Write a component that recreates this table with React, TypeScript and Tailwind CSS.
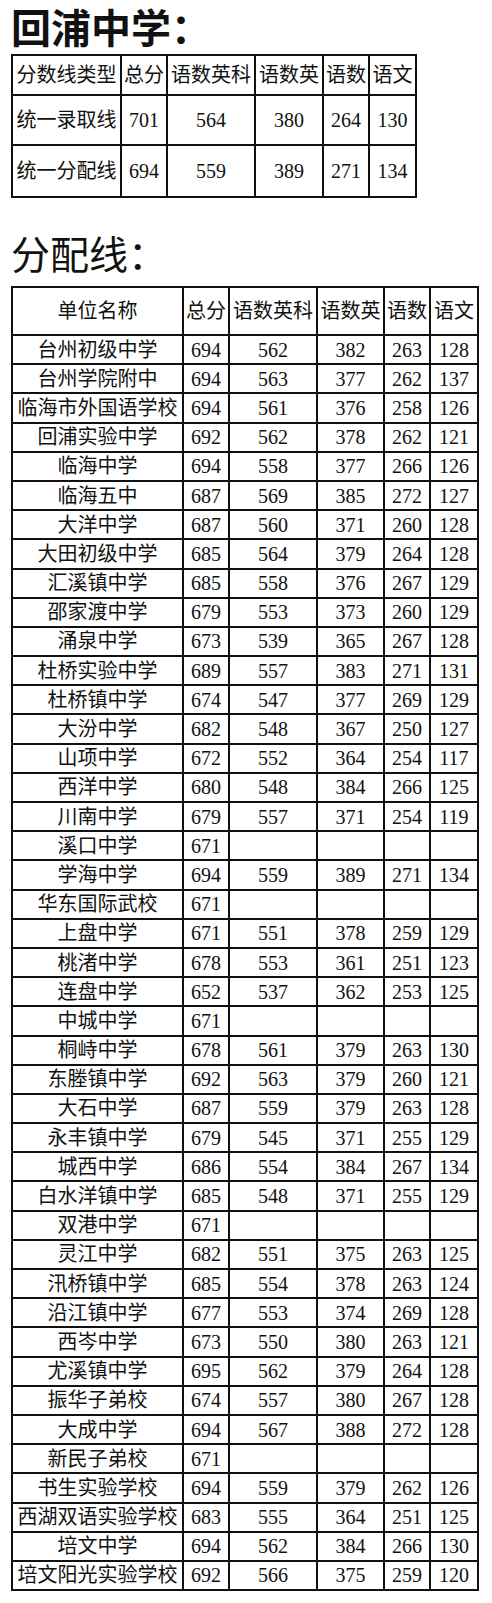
// 回浦中学 admission score lines — static two-table sheet

type Row = [string, string, string?, string?, string?, string?];

const summary: Row[] = [
  ["统一录取线", "701", "564", "380", "264", "130"],
  ["统一分配线", "694", "559", "389", "271", "134"],
];

const schools: Row[] = [
  ["台州初级中学", "694", "562", "382", "263", "128"],
  ["台州学院附中", "694", "563", "377", "262", "137"],
  ["临海市外国语学校", "694", "561", "376", "258", "126"],
  ["回浦实验中学", "692", "562", "378", "262", "121"],
  ["临海中学", "694", "558", "377", "266", "126"],
  ["临海五中", "687", "569", "385", "272", "127"],
  ["大洋中学", "687", "560", "371", "260", "128"],
  ["大田初级中学", "685", "564", "379", "264", "128"],
  ["汇溪镇中学", "685", "558", "376", "267", "129"],
  ["邵家渡中学", "679", "553", "373", "260", "129"],
  ["涌泉中学", "673", "539", "365", "267", "128"],
  ["杜桥实验中学", "689", "557", "383", "271", "131"],
  ["杜桥镇中学", "674", "547", "377", "269", "129"],
  ["大汾中学", "682", "548", "367", "250", "127"],
  ["山项中学", "672", "552", "364", "254", "117"],
  ["西洋中学", "680", "548", "384", "266", "125"],
  ["川南中学", "679", "557", "371", "254", "119"],
  ["溪口中学", "671"],
  ["学海中学", "694", "559", "389", "271", "134"],
  ["华东国际武校", "671"],
  ["上盘中学", "671", "551", "378", "259", "129"],
  ["桃渚中学", "678", "553", "361", "251", "123"],
  ["连盘中学", "652", "537", "362", "253", "125"],
  ["中城中学", "671"],
  ["桐峙中学", "678", "561", "379", "263", "130"],
  ["东塍镇中学", "692", "563", "379", "260", "121"],
  ["大石中学", "687", "559", "379", "263", "128"],
  ["永丰镇中学", "679", "545", "371", "255", "129"],
  ["城西中学", "686", "554", "384", "267", "134"],
  ["白水洋镇中学", "685", "548", "371", "255", "129"],
  ["双港中学", "671"],
  ["灵江中学", "682", "551", "375", "263", "125"],
  ["汛桥镇中学", "685", "554", "378", "263", "124"],
  ["沿江镇中学", "677", "553", "374", "269", "128"],
  ["西岑中学", "673", "550", "380", "263", "121"],
  ["尤溪镇中学", "695", "562", "379", "264", "128"],
  ["振华子弟校", "674", "557", "380", "267", "128"],
  ["大成中学", "694", "567", "388", "272", "128"],
  ["新民子弟校", "671"],
  ["书生实验学校", "694", "559", "379", "262", "126"],
  ["西湖双语实验学校", "683", "555", "364", "251", "125"],
  ["培文中学", "694", "562", "384", "266", "130"],
  ["培文阳光实验学校", "692", "566", "375", "259", "120"],
];

const cell =
  "font-['Liberation_Serif','Noto_Sans_CJK_SC',serif] border-2 border-[#111] p-0 text-center align-middle whitespace-nowrap";

export default function App() {
  return (
    <div className="font-['Liberation_Serif','Noto_Sans_CJK_SC',serif] bg-white text-[#111] w-[492px] min-h-[1603px] pl-[11px] pt-[10px]">
      <h1 className="text-[40px] leading-[40px] font-bold">回浦中学：</h1>

      <table className="mt-[4px] table-fixed border-collapse text-[20px] leading-none w-[404px]">
        <colgroup>
          <col className="w-[109px]" />
          <col className="w-[46px]" />
          <col className="w-[88px]" />
          <col className="w-[68px]" />
          <col className="w-[46px]" />
          <col className="w-[47px]" />
        </colgroup>
        <tbody>
          <tr className="h-[40px]">
            {["分数线类型", "总分", "语数英科", "语数英", "语数", "语文"].map((h) => (
              <td key={h} className={cell}>{h}</td>
            ))}
          </tr>
          {summary.map((r, i) => (
            <tr key={r[0]} className={i === 0 ? "h-[50px]" : "h-[52px]"}>
              {r.map((v, j) => (
                <td key={j} className={cell}>{v}</td>
              ))}
            </tr>
          ))}
        </tbody>
      </table>

      <h2 className="mt-[38px] text-[39px] leading-[40px] font-normal">分配线：</h2>

      <table className="mt-[10px] table-fixed border-collapse text-[20px] leading-none w-[466px]">
        <colgroup>
          <col className="w-[171px]" />
          <col className="w-[46px]" />
          <col className="w-[88px]" />
          <col className="w-[67px]" />
          <col className="w-[46px]" />
          <col className="w-[48px]" />
        </colgroup>
        <tbody>
          <tr className="h-[48px]">
            {["单位名称", "总分", "语数英科", "语数英", "语数", "语文"].map((h) => (
              <td key={h} className={cell}>{h}</td>
            ))}
          </tr>
          {schools.map((r) => (
            <tr key={r[0]} className="h-[29.2px]">
              {[0, 1, 2, 3, 4, 5].map((j) => (
                <td key={j} className={cell}>{r[j] ?? ""}</td>
              ))}
            </tr>
          ))}
        </tbody>
      </table>
    </div>
  );
}
